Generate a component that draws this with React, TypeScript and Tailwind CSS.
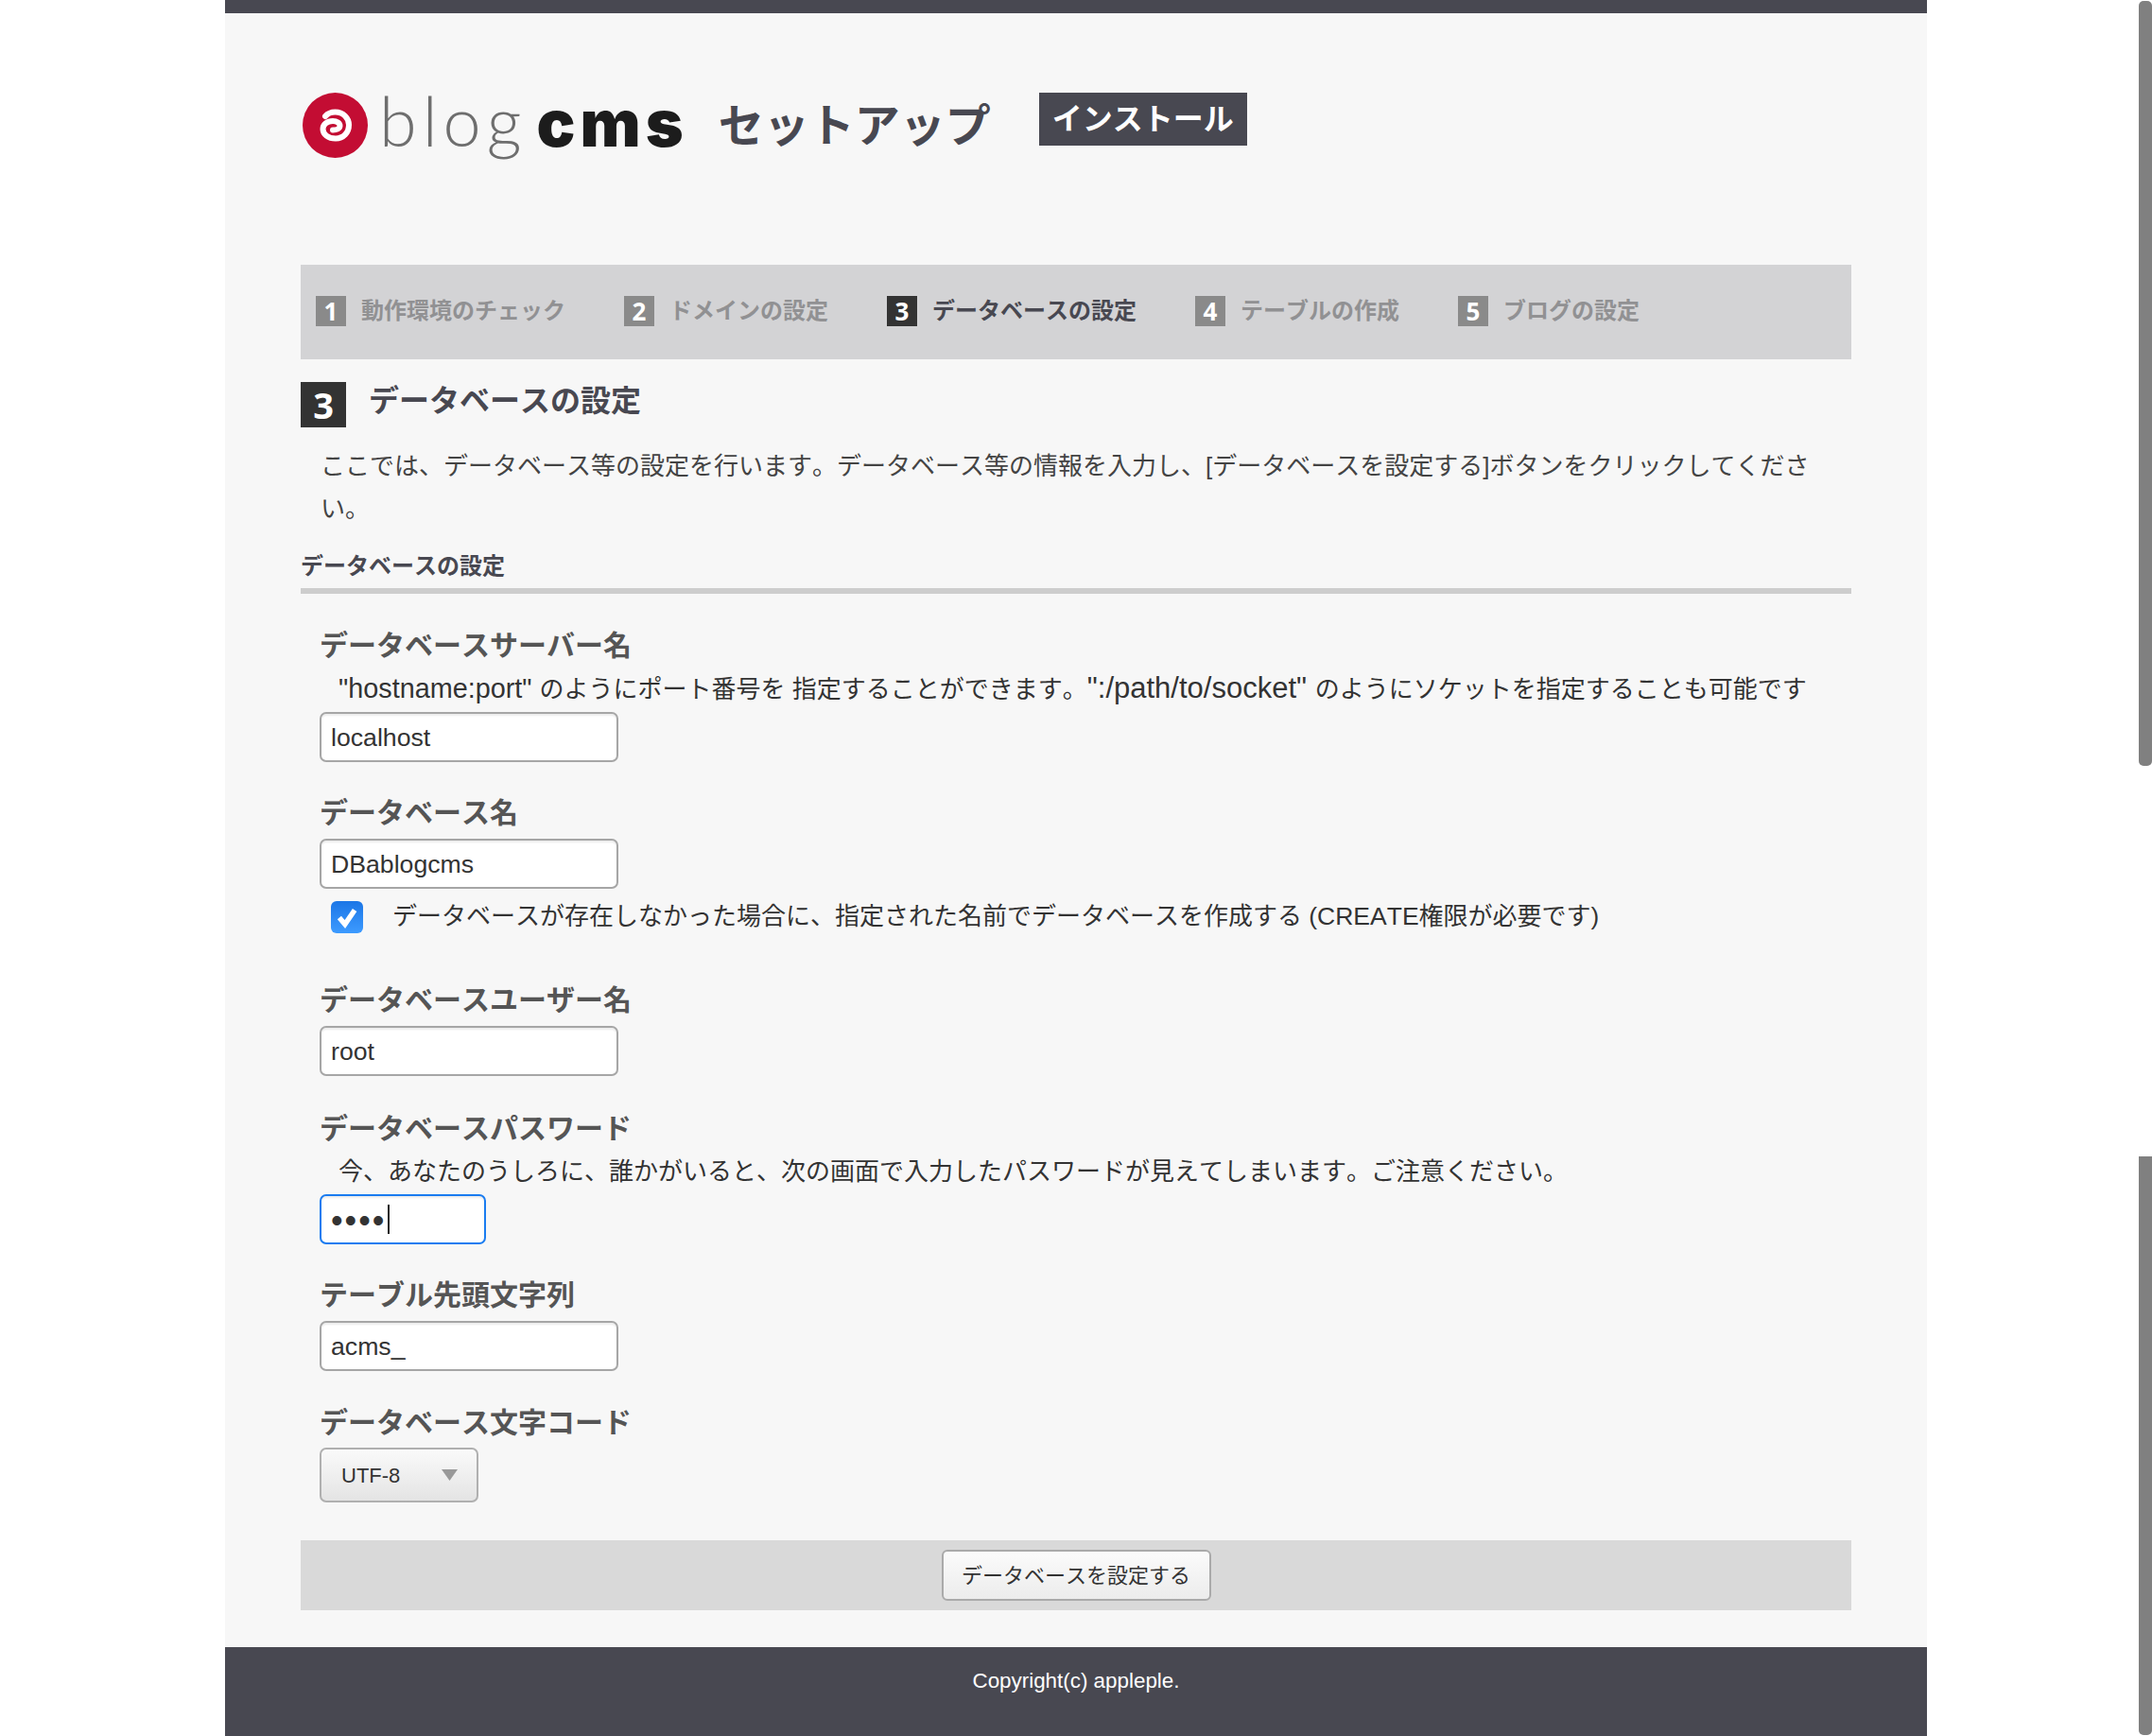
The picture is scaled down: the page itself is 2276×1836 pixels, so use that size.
const STEPS = [
  { no: 1, label: "動作環境のチェック" },
  { no: 2, label: "ドメインの設定" },
  { no: 3, label: "データベースの設定", active: true },
  { no: 4, label: "テーブルの作成" },
  { no: 5, label: "ブログの設定" },
];

const FONT = "font-['Liberation_Sans','Noto_Sans_CJK_JP',sans-serif] [font-kerning:none]";
const INPUT =
  "block h-[53px] rounded-[7px] border-2 bg-white px-[10px] pt-[2px] text-[26.67px] text-[#333] shadow-[inset_0_2px_2px_rgba(0,0,0,0.08)] outline-none";

function LogoMark() {
  return (
    <svg width="69" height="69" viewBox="0 0 69 69" className="shrink-0">
      <circle cx="34.5" cy="34.5" r="34.5" fill="#c30d33" />
      <path
        d="M24 25C27 21.5 31 20.5 34.5 20.5C43 20.5 49 27 49 34C49 42.5 43 48.5 35 48.5C27 48.5 21.5 44 21.5 38.5C21.5 33.5 26 30 32 30C36.5 30 39.5 32.5 39.5 35C39.5 38 36 39.5 32 39.5"
        fill="none"
        stroke="#fff"
        strokeWidth="6"
        strokeLinecap="round"
      />
    </svg>
  );
}

function Field({
  label,
  help,
  className,
  children,
}: {
  label: string;
  help?: React.ReactNode;
  className?: string;
  children: React.ReactNode;
}) {
  return (
    <div className={className}>
      <h3 className="mb-[9px] text-[30px] leading-[36px] font-bold text-[#555]">{label}</h3>
      {help && <p className="mb-[6px] pl-[20px] text-[26px] leading-[36px] whitespace-nowrap text-[#333]">{help}</p>}
      {children}
    </div>
  );
}

export default function App() {
  return (
    <div className={`flex h-[1836px] w-[2276px] overflow-hidden bg-white ${FONT}`}>
      <div className="ml-[238px] flex w-[1800px] flex-col bg-[#f7f7f7]">
        <div className="h-[14px] bg-[#484851]" />

        {/* ヘッダー */}
        <header className="flex h-[266px] items-start pt-[84px] pl-[82px]">
          <LogoMark />
          <span className="-mt-[5px] ml-[12px] font-['Lato',sans-serif] text-[72px] leading-[69px] font-light tracking-[6px] text-[#6e6e6e]">
            blog
          </span>
          <span className="-mt-[2px] ml-[10px] font-['Inter',sans-serif] text-[68px] leading-[69px] font-black tracking-[5px] text-[#1c1c1c]">
            cms
          </span>
          <span className="mt-[8px] ml-[32px] text-[48px] leading-[56px] font-bold text-[#484851]">セットアップ</span>
          <span className="ml-[51px] flex h-[56px] w-[220px] items-center justify-center bg-[#484851] text-[32px] font-bold text-white">
            インストール
          </span>
        </header>

        <main className="flex flex-1 flex-col px-[80px]">
          {/* ステップ */}
          <ol className="flex h-[100px] items-center gap-[62px] bg-[#d3d3d5] pl-[16px]">
            {STEPS.map((s) => (
              <li key={s.no} className="-mt-[2px] flex items-center gap-[16px]">
                <span
                  className={`flex h-[32px] w-[32px] items-center justify-center font-['Open_Sans',sans-serif] text-[26px] font-bold text-white ${
                    s.active ? "bg-[#333]" : "bg-[#8a8a8a]"
                  }`}
                >
                  {s.no}
                </span>
                <span className={`text-[24px] font-bold ${s.active ? "text-[#484851]" : "text-[#919193]"}`}>
                  {s.label}
                </span>
              </li>
            ))}
          </ol>

          <div className="mt-[24px] flex items-start gap-[24px]">
            <span className="flex h-[48px] w-[48px] items-center justify-center bg-[#333] font-['Open_Sans',sans-serif] text-[38px] font-bold text-white">
              3
            </span>
            <h1 className="mt-[1px] text-[32px] leading-[38px] font-bold text-[#484851]">データベースの設定</h1>
          </div>

          <p className="mt-[19px] pr-[40px] pl-[21px] text-[26px] leading-[45px] text-[#444]">
            ここでは、データベース等の設定を行います。データベース等の情報を入力し、[データベースを設定する]ボタンをクリックしてください。
          </p>

          <h2 className="mt-[23px] border-b-[6px] border-[#cdcdcd] pb-[8px] text-[24px] leading-[30px] font-bold text-[#484851]">
            データベースの設定
          </h2>

          <form className="px-[20px]">
            <Field
              label="データベースサーバー名"
              help={
                <>
                  <span className="text-[28.8px]">"hostname:port" </span>
                  のようにポート番号を 指定することができます。
                  <span className="text-[31px]">":/path/to/socket" </span>
                  のようにソケットを指定することも可能です
                </>
              }
              className="mt-[37px]"
            >
              <input defaultValue="localhost" className={`${INPUT} w-[316px] border-[#a6a6a6]`} />
            </Field>

            <Field label="データベース名" className="mt-[36px]">
              <input defaultValue="DBablogcms" className={`${INPUT} w-[316px] border-[#a6a6a6]`} />
              <label className="mt-[13px] ml-[12px] flex h-[34px] items-center gap-[31px] text-[26px] text-[#333]">
                <span className="flex h-[34px] w-[34px] items-center justify-center rounded-[6px] bg-gradient-to-b from-[#1b76e6] to-[#3d9bff]">
                  <svg width="26" height="26" viewBox="0 0 24 24" fill="none">
                    <path d="M4.5 12.5l5.5 6.5L19.5 5" stroke="#fff" strokeWidth="5" />
                  </svg>
                </span>
                <span>
                  データベースが存在しなかった場合に、指定された名前でデータベースを作成する{" "}
                  <span className="text-[26.5px]">(CREATE</span>権限が必要です)
                </span>
              </label>
            </Field>

            <Field label="データベースユーザー名" className="mt-[53px]">
              <input defaultValue="root" className={`${INPUT} w-[316px] border-[#a6a6a6]`} />
            </Field>

            <Field
              label="データベースパスワード"
              help="今、あなたのうしろに、誰かがいると、次の画面で入力したパスワードが見えてしまいます。ご注意ください。"
              className="mt-[38px]"
            >
              <div className="relative w-[176px]">
                <input
                  type="password"
                  defaultValue="root"
                  className={`${INPUT} w-[176px] border-[#1a7cf0] text-[36px] tracking-[2px]`}
                />
                <div className="absolute top-[11px] left-[72px] h-[31px] w-[2px] bg-[#222]" />
              </div>
            </Field>

            <Field label="テーブル先頭文字列" className="mt-[36px]">
              <input defaultValue="acms_" className={`${INPUT} w-[316px] border-[#a6a6a6]`} />
            </Field>

            <Field label="データベース文字コード" className="mt-[37px]">
              <div className="-mt-[1px] flex h-[58px] w-[168px] items-center justify-between rounded-[7px] border-2 border-[#b0b0b0] bg-gradient-to-b from-[#fafafa] to-[#e4e4e4] pr-[20px] pl-[21px] text-[22px] text-[#333]">
                UTF-8
                <svg width="17" height="12" viewBox="0 0 17 12" className="-mt-[1px]">
                  <path d="M0 0H17L8.5 12Z" fill="#999" />
                </svg>
              </div>
            </Field>
          </form>

          <div className="mt-[40px] flex h-[74px] items-center justify-center bg-[#d9d9d9]">
            <button
              type="button"
              className="h-[54px] w-[285px] rounded-[6px] border-2 border-[#aaa] bg-gradient-to-b from-[#fbfbfb] to-[#ececec] text-[22px] text-[#333]"
            >
              データベースを設定する
            </button>
          </div>
        </main>

        <footer className="flex h-[94px] justify-center bg-[#484851] pt-[22px] text-[22.4px] leading-[28px] text-white">
          Copyright(c) appleple.
        </footer>
      </div>

      {/* スクロールバー */}
      <aside className="ml-auto flex w-[14px] flex-col justify-between py-[1px]">
        <div className="h-[809px] rounded-[5px] bg-[#808080]" />
        <div className="h-[612px] rounded-b-[5px] bg-[#808080]" />
      </aside>
    </div>
  );
}
